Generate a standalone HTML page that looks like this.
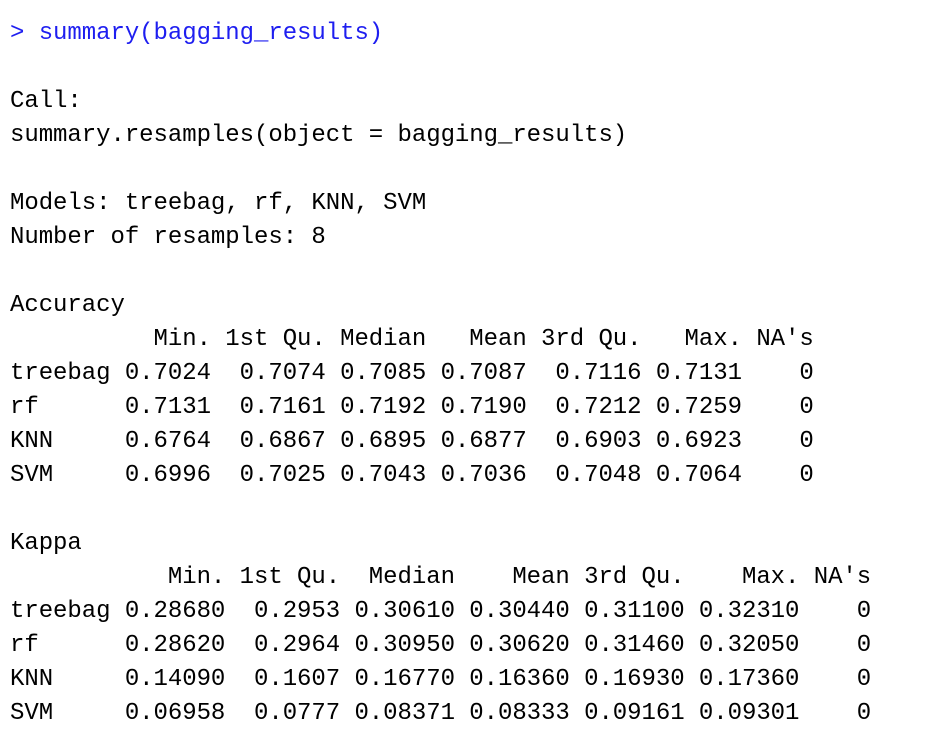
<!DOCTYPE html>
<html><head><meta charset="utf-8"><style>
html,body{margin:0;padding:0;background:#fff;width:926px;height:748px;overflow:hidden}
pre{margin:0;position:absolute;left:10px;top:17px;font-family:"Liberation Mono",monospace;font-size:24px;line-height:34px;color:#000;letter-spacing:-0.05px}
.b{color:#1e1ef0}
</style></head><body><pre><span class="b">&gt; summary(bagging_results)</span>

Call:
summary.resamples(object = bagging_results)

Models: treebag, rf, KNN, SVM
Number of resamples: 8

Accuracy
          Min. 1st Qu. Median   Mean 3rd Qu.   Max. NA's
treebag 0.7024  0.7074 0.7085 0.7087  0.7116 0.7131    0
rf      0.7131  0.7161 0.7192 0.7190  0.7212 0.7259    0
KNN     0.6764  0.6867 0.6895 0.6877  0.6903 0.6923    0
SVM     0.6996  0.7025 0.7043 0.7036  0.7048 0.7064    0

Kappa
           Min. 1st Qu.  Median    Mean 3rd Qu.    Max. NA's
treebag 0.28680  0.2953 0.30610 0.30440 0.31100 0.32310    0
rf      0.28620  0.2964 0.30950 0.30620 0.31460 0.32050    0
KNN     0.14090  0.1607 0.16770 0.16360 0.16930 0.17360    0
SVM     0.06958  0.0777 0.08371 0.08333 0.09161 0.09301    0</pre></body></html>
